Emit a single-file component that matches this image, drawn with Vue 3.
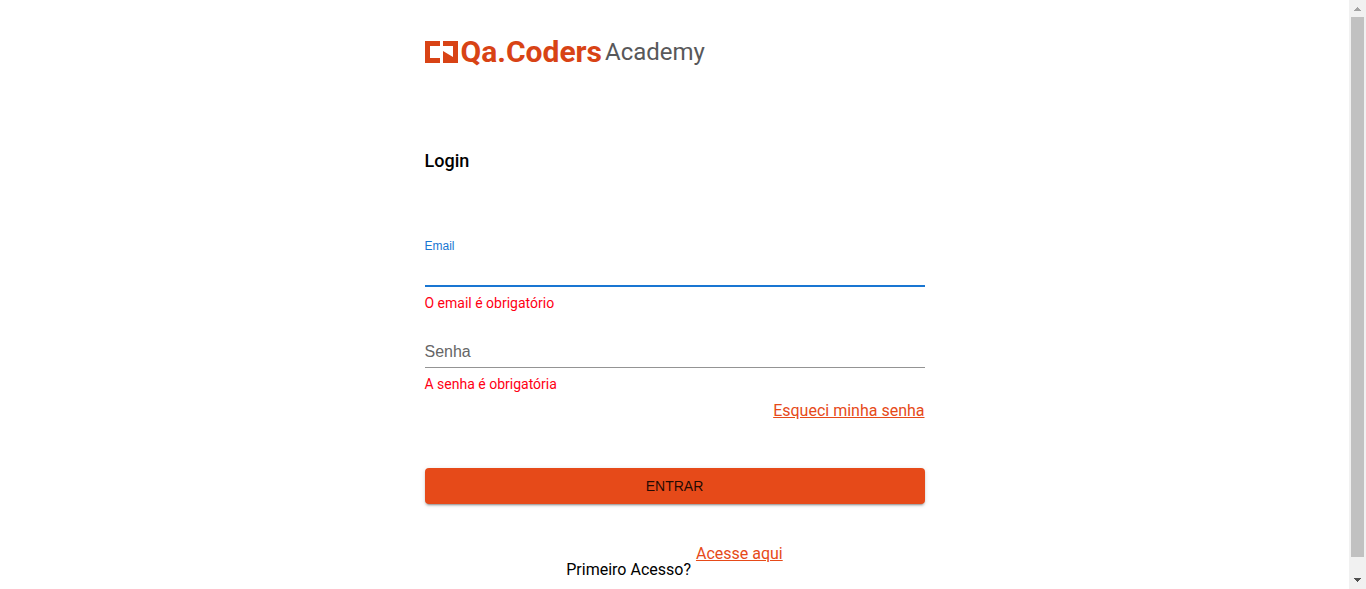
<script setup>
import { ref } from 'vue'

const email = ref('')
const password = ref('')
</script>

<template>
  <div class="page">
    <main class="content">
      <header class="logo">
        <svg class="mark" width="33" height="22" viewBox="0 0 33 22" aria-hidden="true">
          <path d="M0 0H15V5H5V17H15V22H0Z" />
          <path d="M18 0H33V22H18V10L28 16V5H18Z" />
        </svg>
        <span class="brand">Qa.Coders</span>
        <span class="academy">Academy</span>
      </header>

      <h1>Login</h1>

      <form novalidate @submit.prevent>
        <div class="field active">
          <label for="email">Email</label>
          <input id="email" v-model="email" type="email" />
        </div>
        <p class="error">O email é obrigatório</p>

        <div class="field">
          <label for="password">Senha</label>
          <input id="password" v-model="password" type="password" />
        </div>
        <p class="error">A senha é obrigatória</p>

        <a class="forgot" href="#">Esqueci minha senha</a>
        <button type="submit">ENTRAR</button>
      </form>

      <footer class="signup">
        <span>Primeiro Acesso?</span>
        <a href="#">Acesse aqui</a>
      </footer>
    </main>

    <div class="scrollbar" aria-hidden="true">
      <svg width="17" height="17" viewBox="0 0 17 17" shape-rendering="crispEdges">
        <path d="M8 7H9V8H10V9H11V10H12V11H5V10H6V9H7V8H8Z" fill="#a3a3a3" />
      </svg>
      <div class="thumb"></div>
      <svg class="down" width="17" height="32" viewBox="0 0 17 32" shape-rendering="crispEdges">
        <path d="M5 21H12V22H11V23H10V24H9V25H8V24H7V23H6V22H5Z" fill="#505050" />
      </svg>
    </div>
  </div>
</template>

<style>
body {
  overflow: hidden;
}
</style>

<style scoped>
.page {
  display: flex;
  height: 100vh;
  overflow: hidden;
  background: #fff;
  color: #000;
  font: 16px/20px Roboto, "Liberation Sans", sans-serif;
}

.content {
  width: 100%;
  max-width: 500px;
  margin: 0 auto;
  padding-top: 36px;
}

.logo {
  display: flex;
  align-items: center;
  height: 32px;
  white-space: nowrap;
}

.mark {
  flex: none;
  fill: #d84315;
}

.brand {
  margin-left: 3px;
  color: #d84315;
  font-size: 30px;
  font-weight: 700;
  line-height: 32px;
}

.academy {
  margin-left: 3px;
  color: #58585a;
  font-size: 24px;
  line-height: 32px;
}

h1 {
  margin: 81px 0 0;
  font-size: 18px;
  font-weight: 500;
  line-height: 24px;
}

form {
  display: flex;
  flex-direction: column;
  margin-top: 63px;
}

.field {
  position: relative;
  display: flex;
  height: 48px;
  border-bottom: 1px solid #949494;
  font-family: "Liberation Sans", sans-serif;
}

.field label {
  position: absolute;
  top: 23px;
  left: 0;
  color: #666;
}

.field.active {
  height: 49px;
  border-bottom: 2px solid #1976d2;
}

.field.active label {
  top: 0;
  color: #1976d2;
  font-size: 12px;
}

.field input {
  width: 100%;
  padding: 20px 0 4px;
  border: 0;
  outline: 0;
  background: transparent;
  font: inherit;
}

.error {
  margin: 6px 0 0;
  color: #ff0014;
  font-size: 14px;
}

.error + .field {
  margin-top: 6px;
}

a {
  color: #e64a19;
}

.forgot {
  align-self: flex-end;
  margin-top: 7px;
}

button {
  height: 36px;
  margin-top: 47px;
  border: 0;
  border-radius: 4px;
  background: #e64a19;
  box-shadow: 0 3px 1px -2px rgba(0, 0, 0, 0.2), 0 2px 2px rgba(0, 0, 0, 0.14), 0 1px 5px rgba(0, 0, 0, 0.12);
  color: rgba(0, 0, 0, 0.87);
  font: 14px/24px "Liberation Sans", sans-serif;
}

.signup {
  display: flex;
  justify-content: center;
  gap: 5px;
  margin-top: 40px;
}

.signup span {
  padding-top: 16px;
}

.scrollbar {
  display: flex;
  flex: none;
  flex-direction: column;
  width: 17px;
  background: #f1f1f1;
}

.scrollbar svg {
  flex: none;
}

.thumb {
  flex: 1;
  margin: 0 2px;
  background: #c1c1c1;
}
</style>
